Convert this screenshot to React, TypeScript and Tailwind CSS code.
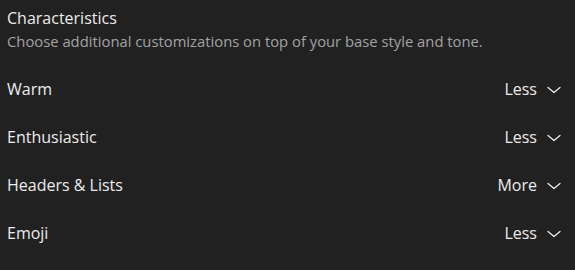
const rows = [
  { name: 'Warm', value: 'Less' },
  { name: 'Enthusiastic', value: 'Less' },
  { name: 'Headers & Lists', value: 'More' },
  { name: 'Emoji', value: 'Less' },
]

function Chevron() {
  return (
    <svg width="14" height="8" viewBox="0 0 14 8" fill="none" className="mt-[1px]">
      <path d="M1 1.5 L7 6.5 L13 1.5" stroke="currentColor" strokeWidth="1.3" strokeLinecap="round" strokeLinejoin="round" />
    </svg>
  )
}

export default function App() {
  return (
    <div
      className="h-[270px] w-full bg-[#212121] text-[#ececec] px-[7px] pt-[7px]"
      style={{ fontFamily: '"Open Sans", "Noto Sans", sans-serif' }}
    >
      <div className="text-[16px] leading-[22px]">Characteristics</div>
      <div className="text-[14.8px] leading-[20px] text-[#a3a3a3] mt-[2px]">
        Choose additional customizations on top of your base style and tone.
      </div>
      <div className="mt-[14px] flex flex-col">
        {rows.map((r) => (
          <div key={r.name} className="flex h-[48px] items-center justify-between text-[16px]">
            <span>{r.name}</span>
            <button className="flex items-center gap-[10px] pr-[7px] text-[16px] text-[#ececec]">
              {r.value}
              <Chevron />
            </button>
          </div>
        ))}
      </div>
    </div>
  )
}
